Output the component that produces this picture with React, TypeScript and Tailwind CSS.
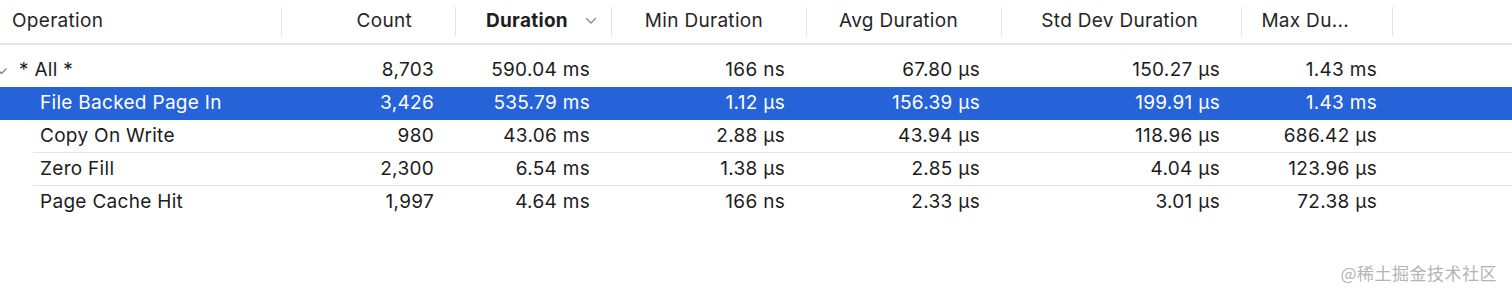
import React from "react";

type Row = {
  name: string;
  count: string;
  duration: string;
  min: string;
  avg: string;
  std: string;
  max: string;
  level: number;
  selected?: boolean;
  divider?: boolean;
};

const rows: Row[] = [
  { name: "* All *", count: "8,703", duration: "590.04 ms", min: "166 ns", avg: "67.80 µs", std: "150.27 µs", max: "1.43 ms", level: 0 },
  { name: "File Backed Page In", count: "3,426", duration: "535.79 ms", min: "1.12 µs", avg: "156.39 µs", std: "199.91 µs", max: "1.43 ms", level: 1, selected: true },
  { name: "Copy On Write", count: "980", duration: "43.06 ms", min: "2.88 µs", avg: "43.94 µs", std: "118.96 µs", max: "686.42 µs", level: 1, divider: true },
  { name: "Zero Fill", count: "2,300", duration: "6.54 ms", min: "1.38 µs", avg: "2.85 µs", std: "4.04 µs", max: "123.96 µs", level: 1, divider: true },
  { name: "Page Cache Hit", count: "1,997", duration: "4.64 ms", min: "166 ns", avg: "2.33 µs", std: "3.01 µs", max: "72.38 µs", level: 1 },
];

// column widths line up with the header separators
const cols = "grid-cols-[281px_174px_156px_195px_195px_240px_151px_1fr]";

function HeaderCell({ label, bold, sorted, first }: { label: string; bold?: boolean; sorted?: boolean; first?: boolean }) {
  return (
    <div className="relative flex items-center h-full">
      {!first && <div className="w-px h-[29px] bg-[#e3e3e3] shrink-0" />}
      <div className={first ? "flex-1 pl-3 text-left" : "flex-1 pr-[43px] text-right"}>
        <span className={bold ? "font-bold text-[#1f1f1f]" : "text-[#262626]"}>{label}</span>
      </div>
      {sorted && (
        <svg className="absolute right-[14px] top-[17px]" width="12" height="8" viewBox="0 0 12 8">
          <polyline points="1.5,1.5 6,6 10.5,1.5" fill="none" stroke="#8a8a8a" strokeWidth="1.4" strokeLinecap="round" strokeLinejoin="round" />
        </svg>
      )}
    </div>
  );
}

function Cell({ children, last }: { children: React.ReactNode; last?: boolean }) {
  return <div className={`text-right whitespace-nowrap ${last ? "pr-[15px]" : "pr-[21px]"}`}>{children}</div>;
}

export default function App() {
  return (
    <div
      className="relative w-[1512px] h-[298px] bg-white overflow-hidden text-[19px] tracking-[0.3px] text-[#1c1c1c]"
      style={{ fontFamily: "Inter, 'Noto Sans', sans-serif" }}
    >
      {/* header */}
      <div className={`grid ${cols} h-[45px] border-b-2 border-[#e6e6e6]`}>
        <HeaderCell label="Operation" first />
        <HeaderCell label="Count" />
        <HeaderCell label="Duration" bold sorted />
        <HeaderCell label="Min Duration" />
        <HeaderCell label="Avg Duration" />
        <HeaderCell label="Std Dev Duration" />
        <HeaderCell label="Max Du..." />
        <div className="flex items-center h-full">
          <div className="w-px h-[29px] bg-[#e3e3e3]" />
        </div>
      </div>

      {/* rows */}
      <div className="pt-[9px]">
        {rows.map((r) => (
          <div key={r.name} className="relative">
            <div className={`grid ${cols} h-[33px] items-center ${r.selected ? "bg-[#2663d9] text-white" : ""}`}>
              <div className="relative flex items-center whitespace-nowrap">
                {r.level === 0 && (
                  <svg className="absolute left-0 top-1/2 -translate-y-1/2" width="8" height="10" viewBox="0 0 8 10">
                    <polyline points="-3,3 1.5,7.5 6,3" fill="none" stroke="#8c8c8c" strokeWidth="1.5" strokeLinecap="round" strokeLinejoin="round" />
                  </svg>
                )}
                <span className={r.level === 0 ? "pl-[19px]" : "pl-[40px]"}>{r.name}</span>
              </div>
              <Cell>{r.count}</Cell>
              <Cell>{r.duration}</Cell>
              <Cell>{r.min}</Cell>
              <Cell>{r.avg}</Cell>
              <Cell>{r.std}</Cell>
              <Cell last>{r.max}</Cell>
              <div />
            </div>
            {r.divider && <div className="ml-[33px] h-px bg-[#e4e4e4] -mt-px relative" />}
          </div>
        ))}
      </div>

      {/* watermark */}
      <div
        className="absolute right-[15px] bottom-[13px] text-[17px] text-[#b4b4b4] tracking-[0.5px]"
        style={{ fontFamily: "'Noto Sans CJK SC', sans-serif" }}
      >
        @稀土掘金技术社区
      </div>
    </div>
  );
}
